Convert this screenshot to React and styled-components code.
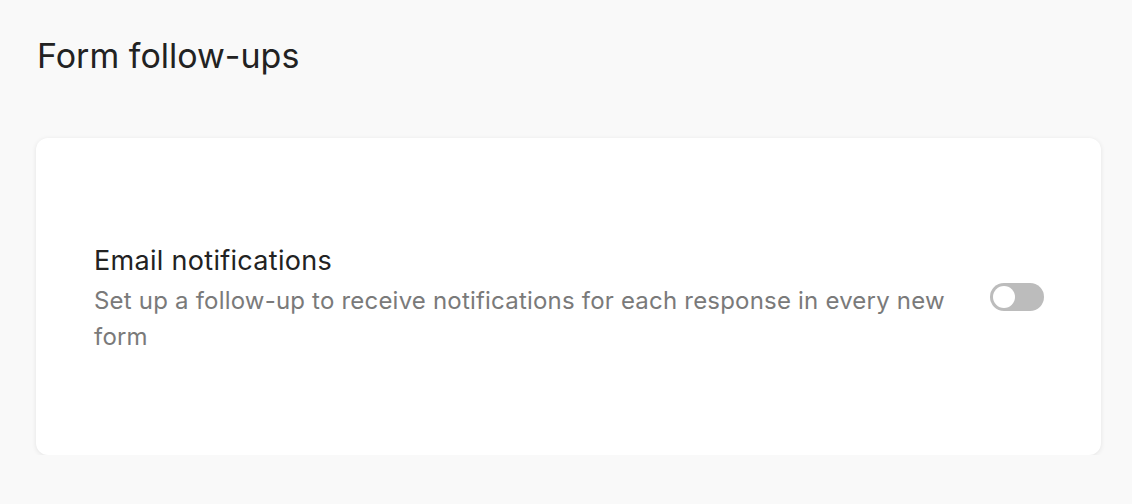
import React, { useState } from "react";
import styled, { createGlobalStyle } from "styled-components";

const Global = createGlobalStyle`
  html, body { margin: 0; padding: 0; background: #f9f9f9; }
  body { font-family: Inter, "Noto Sans", sans-serif; -webkit-font-smoothing: antialiased; }
  * { box-sizing: border-box; }
`;

const Page = styled.div`
  padding: 36px 31px 0 36px;
  display: flex;
  flex-direction: column;
`;

const Title = styled.h1`
  margin: 0 0 0 1px;
  font-size: 34px;
  line-height: 40px;
  font-weight: 400;
  color: #222222;
`;

const Card = styled.section`
  margin-top: 62px;
  height: 317px;
  background: #ffffff;
  border-radius: 12px;
  box-shadow: 0 1px 5px rgba(0, 0, 0, 0.09);
  display: flex;
  align-items: center;
  padding: 0 57px 0 58px;
`;

const Row = styled.div`
  flex: 1;
  display: flex;
  align-items: center;
  gap: 40px;
`;

const Texts = styled.div`
  flex: 1;
  display: flex;
  flex-direction: column;
  gap: 4px;
  padding-top: 5px;
`;

const Label = styled.div`
  font-size: 27px;
  line-height: 36px;
  letter-spacing: 0.3px;
  color: #222222;
`;

const Desc = styled.div`
  font-size: 24px;
  line-height: 36px;
  letter-spacing: 0.2px;
  color: #7a7a7a;
`;

const Toggle = styled.button`
  flex: none;
  width: 54px;
  height: 28px;
  border-radius: 14px;
  border: none;
  padding: 3px;
  background: ${(p) => (p.$on ? "#4a7cf5" : "#bcbcbc")};
  display: flex;
  align-items: center;
  justify-content: ${(p) => (p.$on ? "flex-end" : "flex-start")};
  cursor: pointer;
`;

const Knob = styled.span`
  width: 22px;
  height: 22px;
  border-radius: 50%;
  background: #ffffff;
`;

export default function App() {
  const [on, setOn] = useState(false);
  return (
    <>
      <Global />
      <Page>
        <Title>Form follow-ups</Title>
        <Card>
          <Row>
            <Texts>
              <Label>Email notifications</Label>
              <Desc>
                Set up a follow-up to receive notifications for each response in every new form
              </Desc>
            </Texts>
            <Toggle $on={on} onClick={() => setOn(!on)} aria-label="Email notifications">
              <Knob />
            </Toggle>
          </Row>
        </Card>
      </Page>
    </>
  );
}
